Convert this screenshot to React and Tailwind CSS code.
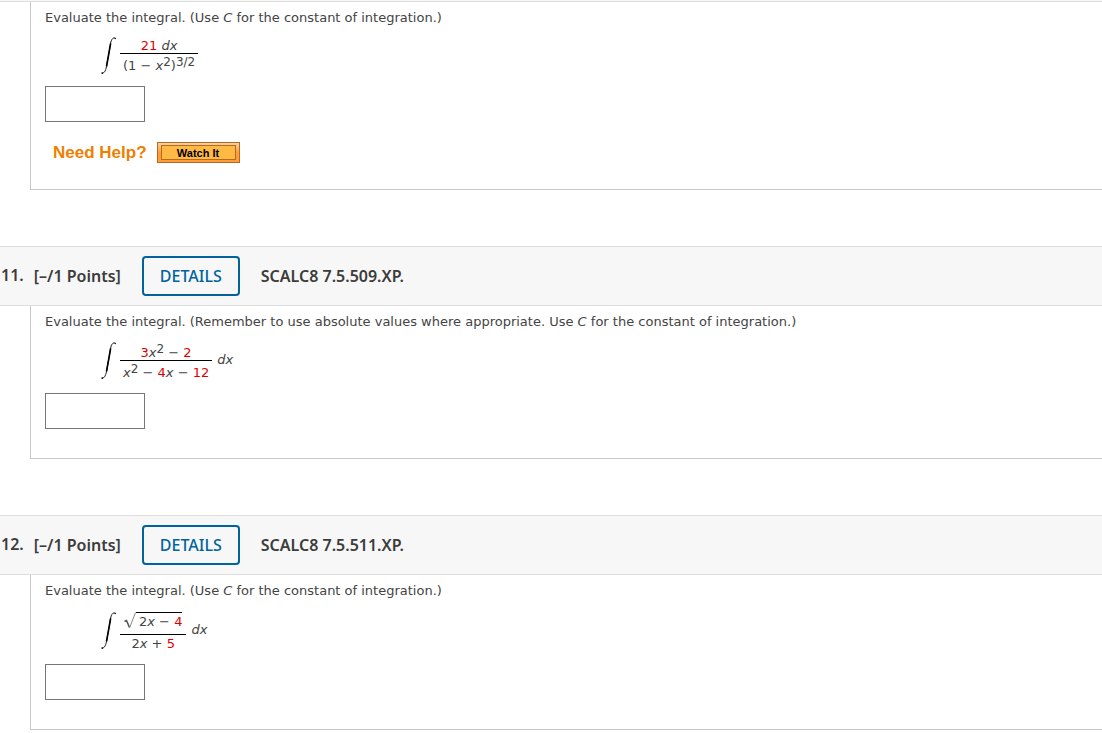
import { useId } from "react";

const Num = ({ children }) => <span className="text-[#dd0000]">{children}</span>;

const X = () => <i>x</i>;

const Sup = ({ children }) => (
  <sup className="top-0 align-[4px] text-[12px] leading-none">{children}</sup>
);

function IntegralSign() {
  return (
    <svg width="16" height="38" viewBox="0 0 16 38" className="mr-[3px] shrink-0" aria-label="integral">
      <path
        d="M14.500 1.200C12.500 0.300 10.800 1.500 9.900 5L8.100 15L5.800 28C5 32.500 3.800 36.300 0.800 36.300"
        fill="none"
        stroke="#000"
        strokeWidth="0.900"
      />
      <path d="M9.600 6.500L8.100 15L5.500 29.500" fill="none" stroke="#000" strokeWidth="1.600" />
      <circle cx="1.200" cy="36.100" r="0.800" />
      <circle cx="14.200" cy="1.500" r="0.700" />
    </svg>
  );
}

function Fraction({ top, bottom, topClass, bottomClass }) {
  return (
    <span className="flex flex-col text-center whitespace-nowrap">
      <span className={`flex justify-center border-b border-black ${topClass}`}>
        <span>{top}</span>
      </span>
      <span className={bottomClass}>{bottom}</span>
    </span>
  );
}

function SquareRoot({ children }) {
  return (
    <span className="flex h-[22px] items-end">
      <svg width="12" height="22" viewBox="0 0 12 22" className="shrink-0">
        <path d="M0.500 9.500L2.500 8.500L5.500 15.500" fill="none" stroke="#555" strokeWidth="1.600" />
        <path d="M5.500 16L11.500 0.500" fill="none" stroke="#888" strokeWidth="1" />
      </svg>
      <span className="h-[22px] border-t border-black pl-[3px] leading-[18px]">{children}</span>
    </span>
  );
}

function Header({ number, code }) {
  return (
    <header className="flex h-[60px] items-center border-y border-[#dddddd] bg-[#f7f7f7] pl-px font-['Noto_Sans','Open_Sans',sans-serif] text-base font-semibold text-[#3c3c3c]">
      <span className="mr-2.5 pb-0.5">{number}.</span>
      <span>[–/1 Points]</span>
      <button
        type="button"
        className="mx-[21px] h-10 rounded border-2 border-[#00639c] bg-[#f7f7f7] px-4 font-medium text-[#00639c]"
      >
        DETAILS
      </button>
      <h2>{code}</h2>
    </header>
  );
}

function Problem({ note, formula, formulaClass, children }) {
  const id = useId();
  return (
    <section className="ml-[30px] border-b border-l border-[#c8c8c8] pt-1.5 pl-[14px]">
      <label htmlFor={id} className="block leading-5">
        Evaluate the integral. ({note}Use <i>C</i> for the constant of integration.)
      </label>
      <div className={`flex items-center pl-14 ${formulaClass}`}>{formula}</div>
      <input id={id} type="text" className="block h-9 w-[100px] border border-[#767676] bg-white px-1" />
      {children}
    </section>
  );
}

export default function App() {
  return (
    <main className="bg-white font-[Verdana,'DejaVu_Sans',sans-serif] text-[13px] text-[#444444]">
      <div className="h-0.5 border-b border-[#dddddd] bg-[#f7f7f7]" />
      <Problem
        formulaClass="mt-2 mb-[11px]"
        formula={
          <>
            <IntegralSign />
            <Fraction
              topClass="h-[18px] leading-5"
              bottomClass="h-[21px] px-[3px] leading-[23px]"
              top={<><Num>21</Num> <i>dx</i></>}
              bottom={<>(1 − <X /><Sup>2</Sup>)<Sup>3/2</Sup></>}
            />
          </>
        }
      >
        <div className="mt-5 mb-[26px] flex h-[21px] items-center pl-2 font-['Liberation_Sans',Arial,sans-serif] font-bold">
          <span className="mr-2.5 text-[17px] text-[#ee8000]">Need Help?</span>
          <button
            type="button"
            className="h-[21px] w-[83px] border border-[#b36b22] bg-linear-to-b from-[#ffd0a0] via-[#ff9c38] to-[#ff9c38] px-[3px] py-0.5 text-[11px] text-black"
          >
            <span className="block h-[15px] border border-[#b36b22] bg-[#ffba45] leading-[14px]">
              Watch It
            </span>
          </button>
        </div>
      </Problem>

      <div className="h-14" />
      <Header number="11" code="SCALC8 7.5.509.XP." />
      <Problem
        note="Remember to use absolute values where appropriate. "
        formulaClass="mt-[9px] mb-[13px]"
        formula={
          <>
            <IntegralSign />
            <Fraction
              topClass="h-5 leading-6"
              bottomClass="h-[19px] px-[3px] leading-[23px]"
              top={<><Num>3</Num><X /><Sup>2</Sup> − <Num>2</Num></>}
              bottom={<><X /><Sup>2</Sup> − <Num>4</Num><X /> − <Num>12</Num></>}
            />
            <i className="ml-[5px] pb-0.5">dx</i>
          </>
        }
      >
        <div className="h-[29px]" />
      </Problem>

      <div className="h-14" />
      <Header number="12" code="SCALC8 7.5.511.XP." />
      <Problem
        formulaClass="mt-[9px] mb-[13px]"
        formula={
          <>
            <IntegralSign />
            <Fraction
              topClass="h-[25px] px-1 pt-0.5"
              bottomClass="h-4 leading-[18px]"
              top={<SquareRoot>2<X /> − <Num>4</Num></SquareRoot>}
              bottom={<>2<X /> + <Num>5</Num></>}
            />
            <i className="ml-[5px] pb-0.5">dx</i>
          </>
        }
      >
        <div className="h-[29px]" />
      </Problem>
    </main>
  );
}
